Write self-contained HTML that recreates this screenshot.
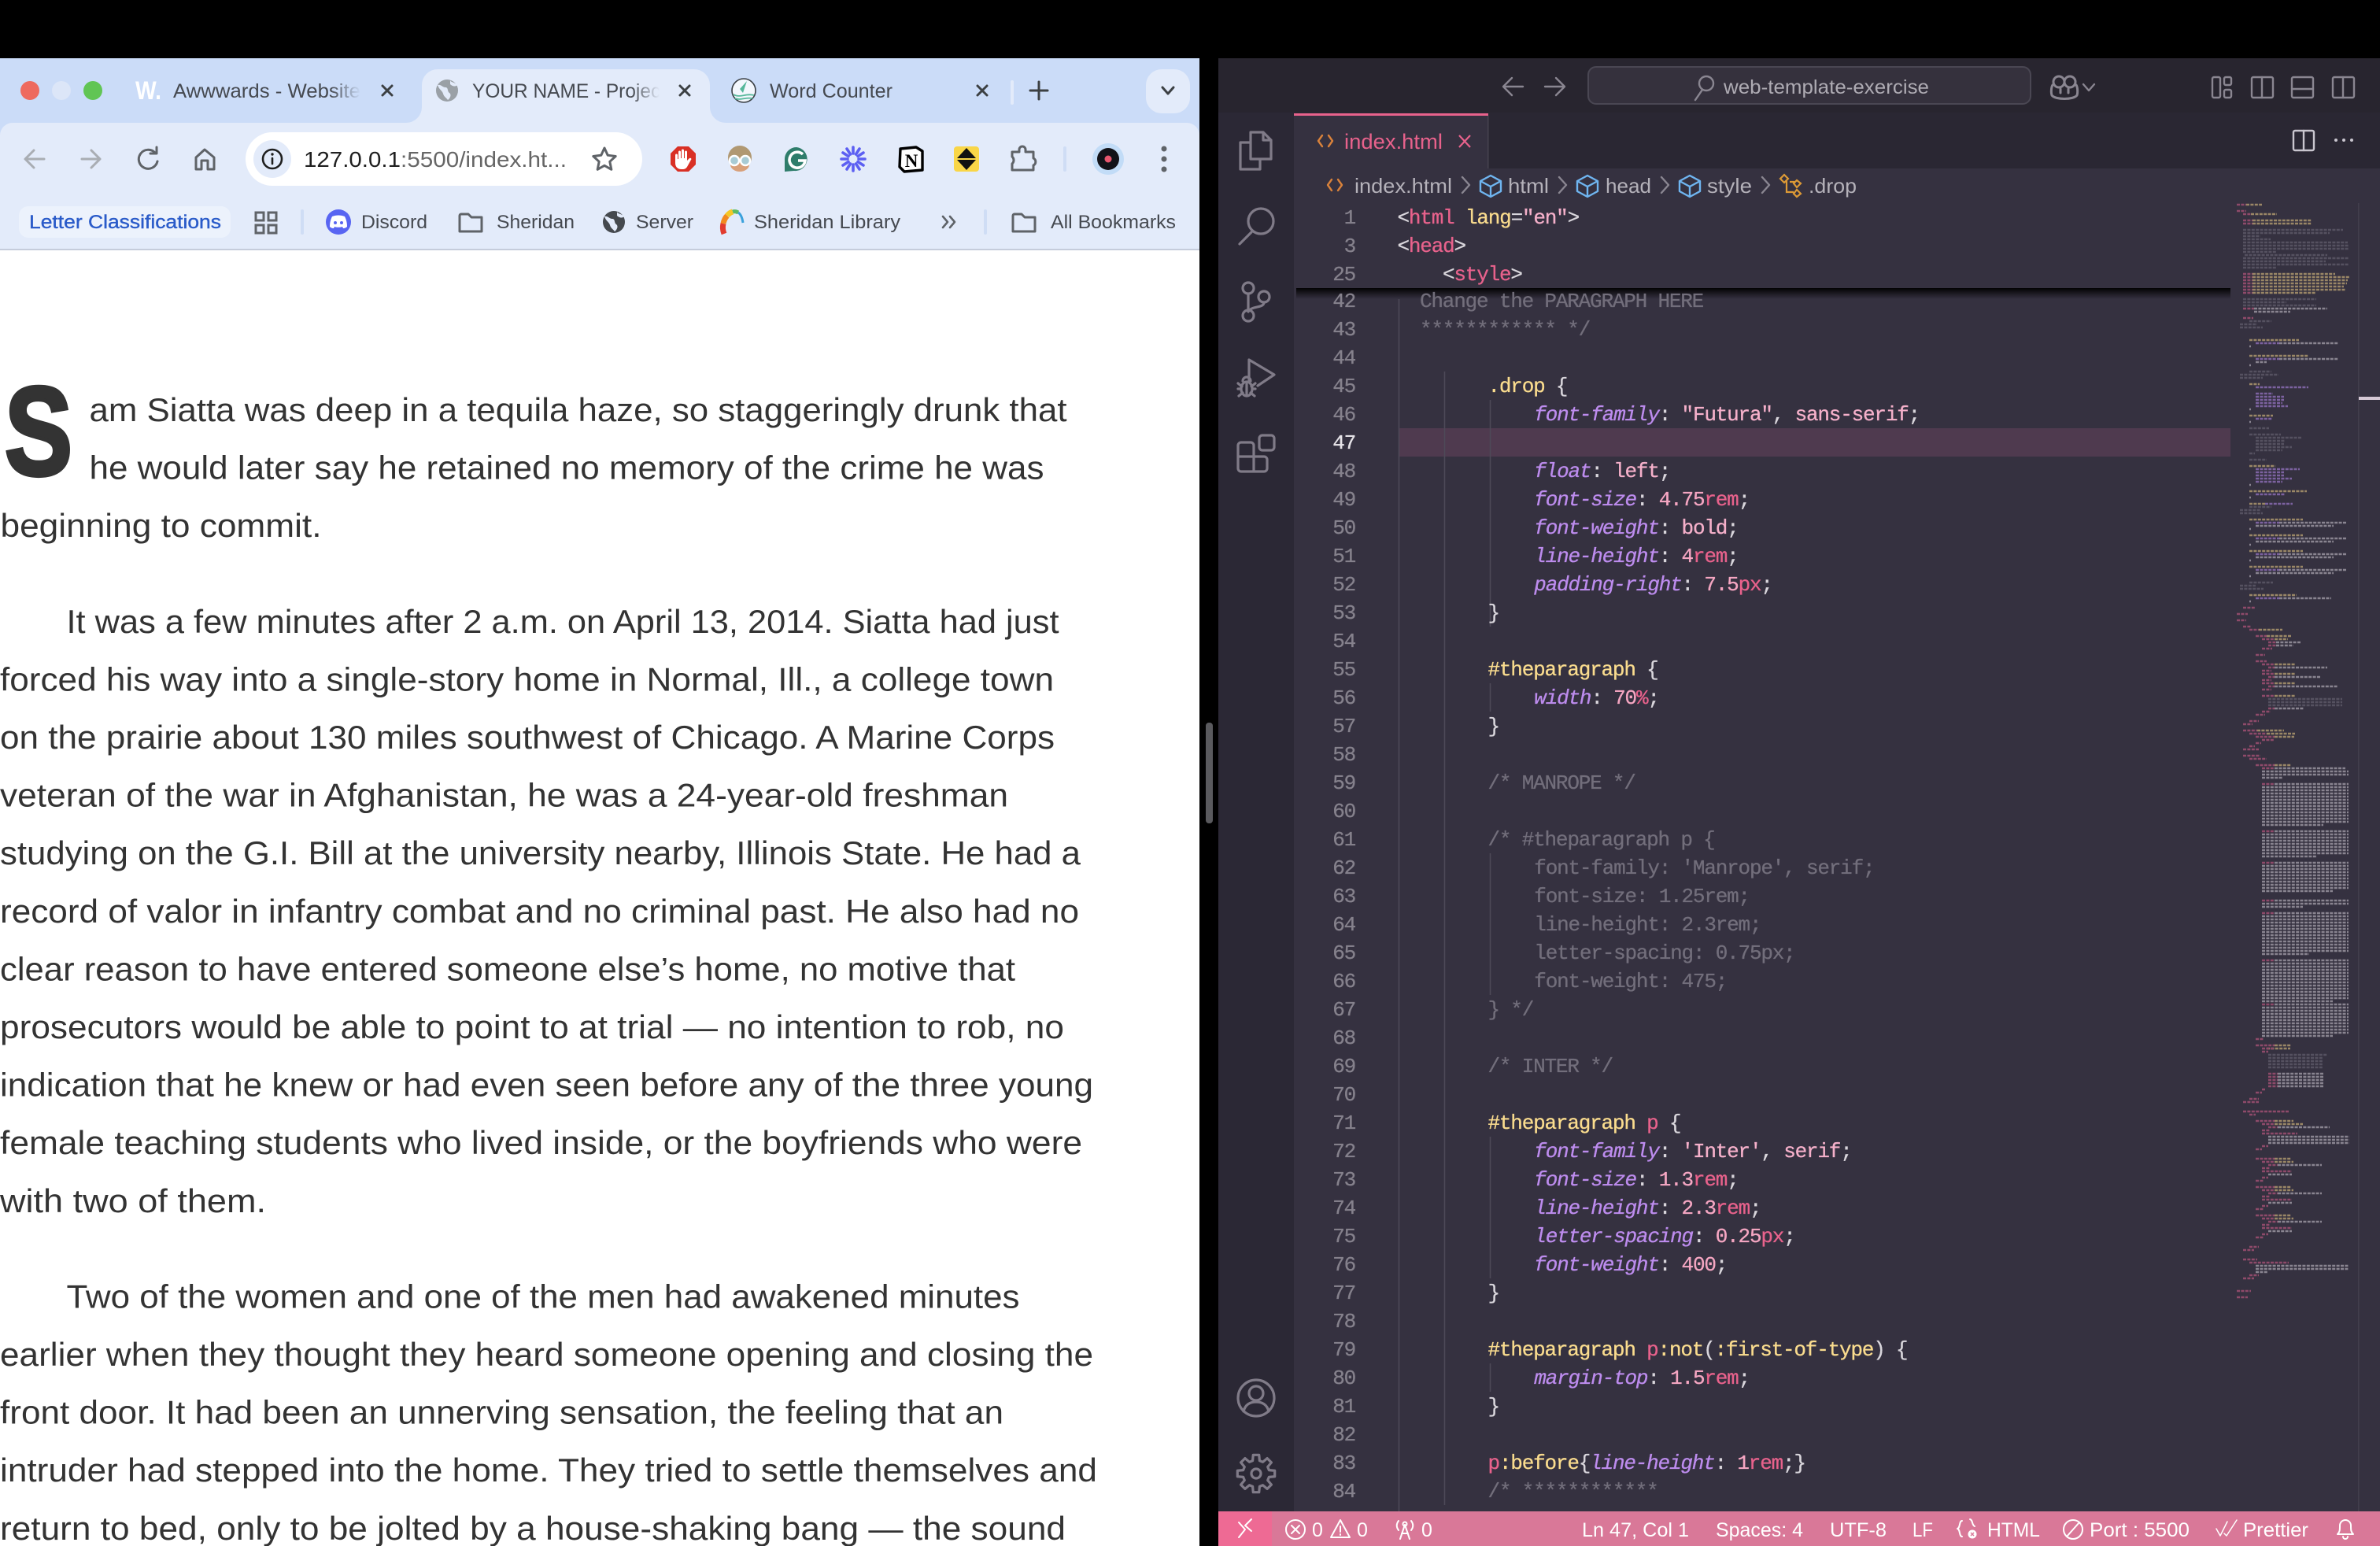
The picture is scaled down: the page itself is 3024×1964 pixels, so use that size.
<!DOCTYPE html>
<html lang="en">
<head>
<meta charset="utf-8">
<title>Screen</title>
<style>
html,body{margin:0;padding:0;background:#000;width:3024px;height:1964px;overflow:hidden}
svg{display:block}
text{white-space:pre}
.u{font-family:"Liberation Sans",sans-serif}
.a{font-family:"Liberation Sans",sans-serif;font-size:42px;fill:#333}
.t{font-family:"Liberation Sans",sans-serif;font-size:25px;fill:#454950}
.b{font-family:"Liberation Sans",sans-serif;font-size:24px;fill:#454950}
.m{font-family:"Liberation Mono",monospace;font-size:26px;letter-spacing:-1.2px;fill:#d9d6dc;stroke:#d9d6dc;stroke-width:.3}
.ln{font-family:"Liberation Mono",monospace;font-size:26px;letter-spacing:-1.2px;fill:#85818c;stroke:#85818c;stroke-width:.3;text-anchor:end}
.y{fill:#fadc8e;stroke:#fadc8e}.w{fill:#d9d6dc}.p{fill:#bd8cee;stroke:#bd8cee;font-style:italic}.s{fill:#f5b0ca;stroke:#f5b0ca}.k{fill:#e8628c;stroke:#e8628c}.n{fill:#f5a6c2;stroke:#f5a6c2}
.cm{fill:#726e7b;stroke:#726e7b}
.st{font-family:"Liberation Sans",sans-serif;font-size:25px;fill:#fff}
.bc{font-family:"Liberation Sans",sans-serif;font-size:26px;fill:#b5b2ba}
.i{fill:none;stroke:#807b88;stroke-width:3.2;stroke-linejoin:round;stroke-linecap:round}
.g{fill:none;stroke:#5f6368;stroke-width:3;stroke-linecap:round;stroke-linejoin:round}
.q{fill:none;stroke:#8a8691;stroke-width:2.4;stroke-linecap:round;stroke-linejoin:round}
.cube{fill:none;stroke:#6fb5f0;stroke-width:2.4;stroke-linejoin:round}
.sw{fill:none;stroke:#fff;stroke-width:2;stroke-linecap:round;stroke-linejoin:round}
</style>
</head>
<body>
<svg xmlns="http://www.w3.org/2000/svg" width="3024" height="1964" viewBox="0 0 3024 1964">
<defs>
<linearGradient id="f1"><stop offset="0" stop-color="#cbdcf8" stop-opacity="0"/><stop offset="1" stop-color="#cbdcf8"/></linearGradient>
<linearGradient id="f2"><stop offset="0" stop-color="#e3ebfa" stop-opacity="0"/><stop offset="1" stop-color="#e3ebfa"/></linearGradient>
<linearGradient id="sh" x1="0" y1="0" x2="0" y2="1"><stop offset="0" stop-color="#000" stop-opacity=".95"/><stop offset=".4" stop-color="#000" stop-opacity=".55"/><stop offset="1" stop-color="#000" stop-opacity="0"/></linearGradient>
</defs>
<rect width="3024" height="1964" fill="#000"/>

<!-- ============ CHROME ============ -->
<rect x="0" y="74" width="1524" height="244" fill="#cbdcf8"/>
<path d="M0 172a16 16 0 0 1 16-16H516a20 20 0 0 0 20-20V108a20 20 0 0 1 20-20H882a20 20 0 0 1 20 20v28a20 20 0 0 0 20 20H1508a16 16 0 0 1 16 16V316H0Z" fill="#e3ebfa"/>
<rect x="0" y="316" width="1524" height="2" fill="#c5ccdb"/>
<rect x="0" y="318" width="1524" height="1646" fill="#fff"/>
<circle cx="38" cy="115" r="12" fill="#ee6a5f"/><circle cx="78" cy="115" r="12" fill="#dce6f8"/><circle cx="118" cy="115" r="12" fill="#61c554"/>

<text class="u" x="172" y="126" font-size="32" font-weight="700" fill="#fff" textLength="33" lengthAdjust="spacingAndGlyphs">W.</text>
<text class="t" x="220" y="124" textLength="238" lengthAdjust="spacingAndGlyphs">Awwwards - Website</text>
<rect x="420" y="96" width="38" height="40" fill="url(#f1)"/>
<path d="M486 109l12 12M498 109l-12 12" stroke="#3c4043" stroke-width="3" stroke-linecap="round"/>

<circle cx="568" cy="115" r="14" fill="#9aa0a6"/>
<path d="M556 108c5-1 6 3 10 3s2 5 5 7 1 7-2 9c-2-3-5-4-6-8s-5-5-7-11zM572 102c1 3 5 2 9 6-3 3-7 1-9-1z" fill="#e3ebfa"/>
<text class="t" x="600" y="124" textLength="246" lengthAdjust="spacingAndGlyphs">YOUR NAME - Project</text>
<rect x="802" y="96" width="36" height="40" fill="url(#f2)"/><rect x="838" y="96" width="14" height="40" fill="#e3ebfa"/>
<path d="M864 109l12 12M876 109l-12 12" stroke="#3c4043" stroke-width="3" stroke-linecap="round"/>

<circle cx="945" cy="115" r="15" fill="#f3f7fd" stroke="#3a3f44" stroke-width="1.6"/>
<path d="M949 103l-5 15 -4-5z" fill="#56b79a"/><path d="M932 120c8 5 16-2 26 1M934 125c7 3 14-2 22 0" fill="none" stroke="#56b79a" stroke-width="1.8"/>
<text class="t" x="978" y="124" textLength="156" lengthAdjust="spacingAndGlyphs">Word Counter</text>
<path d="M1242 109l12 12M1254 109l-12 12" stroke="#3c4043" stroke-width="3" stroke-linecap="round"/>
<rect x="1284" y="102" width="4" height="31" rx="2" fill="#e3ebfa"/>
<path d="M1320 104v22M1309 115h22" stroke="#3c4043" stroke-width="3" stroke-linecap="round"/>
<rect x="1456" y="88" width="56" height="56" rx="20" fill="#e3ebfa"/>
<path d="M1477 111l7 8 7-8" fill="none" stroke="#3c4043" stroke-width="3" stroke-linecap="round" stroke-linejoin="round"/>

<path d="M56 202H33M43 191l-11 11 11 11" fill="none" stroke="#a9adb3" stroke-width="3" stroke-linecap="round" stroke-linejoin="round"/>
<path d="M104 202h23M116 191l11 11-11 11" fill="none" stroke="#a9adb3" stroke-width="3" stroke-linecap="round" stroke-linejoin="round"/>
<path class="g" d="M197 194A12 12 0 1 0 200 205M199 187v8h-8"/>
<path class="g" d="M260 190L249 200V215H256V204H264V215H272V200Z"/>

<rect x="312" y="168" width="504" height="68" rx="34" fill="#fff"/>
<rect x="322" y="178" width="48" height="48" rx="24" fill="#e3ebfa"/>
<circle cx="346" cy="202" r="12" fill="none" stroke="#1f1f1f" stroke-width="2.6"/>
<path d="M346 201v7" stroke="#1f1f1f" stroke-width="2.6" stroke-linecap="round"/><circle cx="346" cy="196" r="1.7" fill="#1f1f1f"/>
<text class="u" x="386" y="212" font-size="28" fill="#1f1f1f" textLength="123" lengthAdjust="spacingAndGlyphs">127.0.0.1</text>
<text class="u" x="509" y="212" font-size="28" fill="#666" textLength="211" lengthAdjust="spacingAndGlyphs">:5500/index.ht...</text>
<path class="g" d="M768 188l4.2 9.2 10 1.3-7.4 6.8 2 10-8.8-5-8.8 5 2-10-7.4-6.8 10-1.3z"/>

<!-- extensions -->
<path d="M861 186h14l9 9v14l-9 9h-14l-9-9v-14z" fill="#d93025"/>
<path d="M858 197c0-2 3-2 3 0v5h1v-9c0-2 3-2 3 0v8h1v-10c0-2 3-2 3 0v10h1v-8c0-2 3-2 3 0v11l3-3c2-1 3 1 2 2l-5 9c-2 3-4 3-7 3-5 0-8-3-8-8z" fill="#fff"/>
<circle cx="940" cy="200" r="15" fill="#b09872"/><ellipse cx="940" cy="209" rx="12" ry="9" fill="#d8a07a"/>
<circle cx="933" cy="204" r="6" fill="#a8cbd5" stroke="#fff" stroke-width="2.4"/><circle cx="947" cy="204" r="6" fill="#a8cbd5" stroke="#fff" stroke-width="2.4"/>
<path d="M1012 187a15 15 0 1 1-3 30l-12 1v-15a15 15 0 0 1 15-16z" fill="#2f7d6b"/>
<path d="M1020 196a10 10 0 1 0 3 8h-9" fill="none" stroke="#fff" stroke-width="3.6"/>
<g transform="translate(1084 202)" stroke="#5c5ff2" stroke-width="3.6" stroke-linecap="round"><path d="M0-7V-15M0 7V15M-7 0H-15M7 0H15M3.5-6L8-13M-3.5 6L-8 13M3.5 6L8 13M-3.5-6L-8-13M6-3.5L13-8M-6 3.5L-13 8M6 3.5L13 8M-6-3.5L-13-8"/></g>
<path d="M1144 189l20-2 8 5v24l-23 2-6-6z" fill="#fff" stroke="#000" stroke-width="3.4" stroke-linejoin="round"/>
<text x="1158" y="212" font-family="Liberation Serif,serif" font-weight="700" font-size="23" fill="#000" text-anchor="middle">N</text>
<rect x="1212" y="186" width="32" height="32" rx="4" fill="#f9d648"/>
<path d="M1228 188l12 13h-24zM1228 216l12-13h-24z" fill="#111"/>
<path class="g" d="M1286 193h9v-3a4 4 0 0 1 8 0v3h10v8a5 5 0 0 1 0 9v6h-27v-8a6 6 0 0 0 0-9z"/>
<rect x="1351" y="186" width="4" height="32" rx="2" fill="#cfddf5"/>
<circle cx="1408" cy="202" r="20" fill="#c2dcf7"/><circle cx="1408" cy="202" r="14" fill="#121218"/><circle cx="1408" cy="202" r="4.5" fill="#e8566e"/>
<circle cx="1479" cy="189" r="3.5" fill="#5f6368"/><circle cx="1479" cy="202" r="3.5" fill="#5f6368"/><circle cx="1479" cy="215" r="3.5" fill="#5f6368"/>

<!-- bookmarks -->
<rect x="24" y="262" width="269" height="40" rx="12" fill="#ecf2fc"/>
<text class="b" x="37" y="290" stroke="#2a5bc9" stroke-width=".4" textLength="244" lengthAdjust="spacingAndGlyphs" style="fill:#2a5bc9">Letter Classifications</text>
<g fill="none" stroke="#5f6368" stroke-width="3"><rect x="325" y="270" width="10" height="10"/><rect x="341" y="270" width="10" height="10"/><rect x="325" y="286" width="10" height="10"/><rect x="341" y="286" width="10" height="10"/></g>
<rect x="382" y="266" width="4" height="32" rx="2" fill="#cfddf5"/>
<circle cx="430" cy="282" r="16" fill="#5865f2"/>
<path d="M422 275c5-2 11-2 16 0 2 4 3 8 3 13-2 2-4 2-5 2l-1-2c-3 1-7 1-10 0l-1 2c-1 0-3 0-5-2 0-5 1-9 3-13z" fill="#fff"/>
<circle cx="426" cy="283" r="2" fill="#5865f2"/><circle cx="434" cy="283" r="2" fill="#5865f2"/>
<text class="b" x="459" y="290" textLength="84" lengthAdjust="spacingAndGlyphs">Discord</text>
<path class="g" d="M584 274a2 2 0 0 1 2-2h9l4 4h13v18h-28z"/>
<text class="b" x="631" y="290" textLength="99" lengthAdjust="spacingAndGlyphs">Sheridan</text>
<circle cx="780" cy="282" r="14" fill="#45494e"/>
<path d="M768 275c5-1 6 3 10 3s2 5 5 7 1 7-2 9c-2-3-5-4-6-8s-5-5-7-11zM784 269c1 3 5 2 9 6-3 3-7 1-9-1z" fill="#e3ebfa"/>
<text class="b" x="808" y="290" textLength="73" lengthAdjust="spacingAndGlyphs">Server</text>
<g fill="none" stroke-width="7"><path d="M920 297c-2-5-2-9-1-13" stroke="#e23b2e"/><path d="M919 284c1-5 3-8 5-10" stroke="#f28a1f"/><path d="M924 274c2-3 4-4 7-5" stroke="#f5c826"/><path d="M931 269c3-1 5 0 7 1" stroke="#5dbb63" stroke-width="5"/><path d="M938 270c3 2 5 6 6 13" stroke="#3aa1dc" stroke-width="3"/></g>
<text class="b" x="958" y="290" textLength="186" lengthAdjust="spacingAndGlyphs">Sheridan Library</text>
<path d="M1198 275l6 7-6 7M1207 275l6 7-6 7" fill="none" stroke="#5f6368" stroke-width="2.6" stroke-linecap="round" stroke-linejoin="round"/>
<rect x="1250" y="266" width="4" height="32" rx="2" fill="#cfddf5"/>
<path class="g" d="M1287 274a2 2 0 0 1 2-2h9l4 4h13v18h-28z"/>
<text class="b" x="1335" y="290" textLength="159" lengthAdjust="spacingAndGlyphs">All Bookmarks</text>

<!-- article -->
<text x="6" y="603" font-family="Liberation Sans,sans-serif" font-weight="700" font-size="160" fill="#333" stroke="#333" stroke-width="5" textLength="86" lengthAdjust="spacingAndGlyphs">S</text>
<text class="a" x="113.5" y="535" textLength="1242" lengthAdjust="spacingAndGlyphs">am Siatta was deep in a tequila haze, so staggeringly drunk that</text>
<text class="a" x="113.5" y="608.6" textLength="1213" lengthAdjust="spacingAndGlyphs">he would later say he retained no memory of the crime he was</text>
<text class="a" x="0.5" y="682.2" textLength="408" lengthAdjust="spacingAndGlyphs">beginning to commit.</text>
<text class="a" x="84.5" y="803.8" textLength="1261" lengthAdjust="spacingAndGlyphs">It was a few minutes after 2 a.m. on April 13, 2014. Siatta had just</text>
<text class="a" x="0" y="877.4" textLength="1339" lengthAdjust="spacingAndGlyphs">forced his way into a single-story home in Normal, Ill., a college town</text>
<text class="a" x="0" y="951" textLength="1340" lengthAdjust="spacingAndGlyphs">on the prairie about 130 miles southwest of Chicago. A Marine Corps</text>
<text class="a" x="0" y="1024.6" textLength="1281" lengthAdjust="spacingAndGlyphs">veteran of the war in Afghanistan, he was a 24-year-old freshman</text>
<text class="a" x="0" y="1098.2" textLength="1373" lengthAdjust="spacingAndGlyphs">studying on the G.I. Bill at the university nearby, Illinois State. He had a</text>
<text class="a" x="0" y="1171.8" textLength="1371" lengthAdjust="spacingAndGlyphs">record of valor in infantry combat and no criminal past. He also had no</text>
<text class="a" x="0" y="1245.4" textLength="1290" lengthAdjust="spacingAndGlyphs">clear reason to have entered someone else’s home, no motive that</text>
<text class="a" x="0" y="1319" textLength="1352" lengthAdjust="spacingAndGlyphs">prosecutors would be able to point to at trial — no intention to rob, no</text>
<text class="a" x="0" y="1392.6" textLength="1389" lengthAdjust="spacingAndGlyphs">indication that he knew or had even seen before any of the three young</text>
<text class="a" x="0" y="1466.2" textLength="1375" lengthAdjust="spacingAndGlyphs">female teaching students who lived inside, or the boyfriends who were</text>
<text class="a" x="0" y="1539.8" textLength="338" lengthAdjust="spacingAndGlyphs">with two of them.</text>
<text class="a" x="84.5" y="1661.4" textLength="1211" lengthAdjust="spacingAndGlyphs">Two of the women and one of the men had awakened minutes</text>
<text class="a" x="0" y="1735" textLength="1389" lengthAdjust="spacingAndGlyphs">earlier when they thought they heard someone opening and closing the</text>
<text class="a" x="0" y="1808.6" textLength="1275" lengthAdjust="spacingAndGlyphs">front door. It had been an unnerving sensation, the feeling that an</text>
<text class="a" x="0" y="1882.2" textLength="1394" lengthAdjust="spacingAndGlyphs">intruder had stepped into the home. They tried to settle themselves and</text>
<text class="a" x="0" y="1955.8" textLength="1354" lengthAdjust="spacingAndGlyphs">return to bed, only to be jolted by a house-shaking bang — the sound</text>

<!-- divider handle -->
<rect x="1532" y="918" width="9" height="128" rx="4" fill="#5a5a5e"/>

<!-- ============ VS CODE ============ -->
<rect x="1548" y="74" width="1476" height="1890" fill="#353140"/>
<rect x="1548" y="74" width="1476" height="69" fill="#28252f"/>
<rect x="1548" y="143" width="96" height="1777" fill="#2b2835"/>
<rect x="1644" y="143" width="1380" height="71" fill="#2a2733"/>
<rect x="1644" y="144" width="247" height="70" fill="#353140"/>
<rect x="1644" y="144" width="247" height="3" fill="#e8628c"/>
<rect x="1890" y="147" width="1.5" height="67" fill="#47434f"/>

<!-- title bar -->
<path class="q" d="M1935 110h-24M1921 99l-11 11 11 11M1963 110h24M1977 99l11 11-11 11"/>
<rect x="2018" y="85" width="562" height="47" rx="10" fill="#35313d" stroke="#4a4753" stroke-width="2"/>
<circle cx="2168" cy="106" r="9" class="q"/><path class="q" d="M2163 114l-9 13"/>
<text class="u" x="2190" y="119" font-size="25" fill="#aeabb3" textLength="261" lengthAdjust="spacingAndGlyphs">web-template-exercise</text>
<g class="q" style="stroke-width:3"><circle cx="2616" cy="104" r="7"/><circle cx="2630" cy="104" r="7"/><path d="M2608 108c-2 3-2 10-1 13 4 6 28 6 32 0 1-3 1-10-1-13"/><path d="M2618 113v5M2628 113v5"/></g>
<path class="q" d="M2647 107l7 8 7-8"/>
<g class="q"><rect x="2811" y="98" width="10" height="26" rx="2"/><rect x="2826" y="98" width="9" height="10" rx="2"/><rect x="2826" y="114" width="9" height="10" rx="2"/>
<rect x="2861" y="98" width="27" height="26" rx="2"/><path d="M2874 98v26"/>
<rect x="2912" y="98" width="27" height="26" rx="2"/><path d="M2912 113h27"/>
<rect x="2964" y="98" width="27" height="26" rx="2"/><path d="M2977 98v26"/></g>

<!-- tab -->
<path d="M1680 172l-5 7 5 7M1688 172l5 7-5 7" fill="none" stroke="#d9823b" stroke-width="2.4" stroke-linecap="round" stroke-linejoin="round"/>
<text class="u" x="1708" y="189" font-size="27" fill="#e8628c" textLength="125" lengthAdjust="spacingAndGlyphs">index.html</text>
<path d="M1854 172l14 15M1868 172l-14 15" stroke="#e8628c" stroke-width="2.2"/>
<g class="q" style="stroke:#c9c6cf"><rect x="2914" y="166" width="26" height="25" rx="2"/><path d="M2927 166v25"/></g>
<circle cx="2968" cy="178" r="2" fill="#c9c6cf"/><circle cx="2978" cy="178" r="2" fill="#c9c6cf"/><circle cx="2988" cy="178" r="2" fill="#c9c6cf"/>

<!-- breadcrumb -->
<g transform="translate(0 -2)">
<path d="M1692 230l-5 7 5 7M1700 230l5 7-5 7" fill="none" stroke="#d9823b" stroke-width="2.4" stroke-linecap="round" stroke-linejoin="round"/>
<text class="bc" x="1721" y="247" textLength="124" lengthAdjust="spacingAndGlyphs">index.html</text>
<path class="q" d="M1858 227l9 10-9 10M1981 227l9 10-9 10M2111 227l9 10-9 10M2239 227l9 10-9 10"/>
<path class="cube" d="M1894 225l13 7v13l-13 7-13-7v-13zM1881 232l13 7 13-7M1894 239v13"/>
<text class="bc" x="1916" y="247" textLength="52" lengthAdjust="spacingAndGlyphs">html</text>
<path class="cube" d="M2017 225l13 7v13l-13 7-13-7v-13zM2004 232l13 7 13-7M2017 239v13"/>
<text class="bc" x="2040" y="247" textLength="58" lengthAdjust="spacingAndGlyphs">head</text>
<path class="cube" d="M2147 225l13 7v13l-13 7-13-7v-13zM2134 232l13 7 13-7M2147 239v13"/>
<text class="bc" x="2169" y="247" textLength="57" lengthAdjust="spacingAndGlyphs">style</text>
<path d="M2267 224l5 5-5 5-5-5zM2283 231l5 4-5 5-4-5zM2283 243l5 5-5 4-4-4zM2270 232v14h9M2274 233h6" fill="none" stroke="#dd9a36" stroke-width="2.2"/>
<text class="bc" x="2298" y="247" textLength="61" lengthAdjust="spacingAndGlyphs">.drop</text>
</g>

<!-- sticky -->
<text class="ln" x="1722" y="284">1</text>
<text class="ln" x="1722" y="320">3</text>
<text class="ln" x="1722" y="356">25</text>
<text class="m" x="1775.5" y="284">&lt;<tspan class="k">html</tspan> <tspan class="y">lang</tspan>=<tspan class="s">"en"</tspan>&gt;</text>
<text class="m" x="1775.5" y="320">&lt;<tspan class="k">head</tspan>&gt;</text>
<text class="m" x="1833" y="356">&lt;<tspan class="k">style</tspan>&gt;</text>
<rect x="1647" y="366" width="1187" height="14" fill="url(#sh)"/>

<!-- highlight + guides -->
<rect x="1777" y="544" width="1057" height="36" fill="#4f3a4f"/>
<path d="M1777.5 380V1920M1835.5 472V1912M1893.5 508V796M1893.5 868V904M1893.5 1084V1264M1893.5 1444V1624M1893.5 1732V1768" stroke="#4e4a58" stroke-width="1.5" fill="none"/>

<!-- numbers -->
<g>
<text class="ln" x="1722" y="390">42</text><text class="ln" x="1722" y="426">43</text><text class="ln" x="1722" y="462">44</text><text class="ln" x="1722" y="498">45</text><text class="ln" x="1722" y="534">46</text><text class="ln" x="1722" y="570" style="fill:#e6e3e8;stroke:#e6e3e8">47</text><text class="ln" x="1722" y="606">48</text><text class="ln" x="1722" y="642">49</text><text class="ln" x="1722" y="678">50</text><text class="ln" x="1722" y="714">51</text><text class="ln" x="1722" y="750">52</text><text class="ln" x="1722" y="786">53</text><text class="ln" x="1722" y="822">54</text><text class="ln" x="1722" y="858">55</text><text class="ln" x="1722" y="894">56</text><text class="ln" x="1722" y="930">57</text><text class="ln" x="1722" y="966">58</text><text class="ln" x="1722" y="1002">59</text><text class="ln" x="1722" y="1038">60</text><text class="ln" x="1722" y="1074">61</text><text class="ln" x="1722" y="1110">62</text><text class="ln" x="1722" y="1146">63</text><text class="ln" x="1722" y="1182">64</text><text class="ln" x="1722" y="1218">65</text><text class="ln" x="1722" y="1254">66</text><text class="ln" x="1722" y="1290">67</text><text class="ln" x="1722" y="1326">68</text><text class="ln" x="1722" y="1362">69</text><text class="ln" x="1722" y="1398">70</text><text class="ln" x="1722" y="1434">71</text><text class="ln" x="1722" y="1470">72</text><text class="ln" x="1722" y="1506">73</text><text class="ln" x="1722" y="1542">74</text><text class="ln" x="1722" y="1578">75</text><text class="ln" x="1722" y="1614">76</text><text class="ln" x="1722" y="1650">77</text><text class="ln" x="1722" y="1686">78</text><text class="ln" x="1722" y="1722">79</text><text class="ln" x="1722" y="1758">80</text><text class="ln" x="1722" y="1794">81</text><text class="ln" x="1722" y="1830">82</text><text class="ln" x="1722" y="1866">83</text><text class="ln" x="1722" y="1902">84</text>
</g>

<!-- code -->
<text class="m cm" x="1804" y="390">Change the PARAGRAPH HERE</text>
<text class="m cm" x="1804" y="426">************ */</text>
<text class="m" x="1890.5" y="498"><tspan class="y">.drop</tspan> {</text>
<text class="m" x="1949.3" y="534"><tspan class="p">font-family</tspan>: <tspan class="s">"Futura"</tspan>, <tspan class="s">sans-serif</tspan>;</text>
<text class="m" x="1949.3" y="606"><tspan class="p">float</tspan>: <tspan class="s">left</tspan>;</text>
<text class="m" x="1949.3" y="642"><tspan class="p">font-size</tspan>: <tspan class="n">4.75</tspan><tspan class="k">rem</tspan>;</text>
<text class="m" x="1949.3" y="678"><tspan class="p">font-weight</tspan>: <tspan class="s">bold</tspan>;</text>
<text class="m" x="1949.3" y="714"><tspan class="p">line-height</tspan>: <tspan class="n">4</tspan><tspan class="k">rem</tspan>;</text>
<text class="m" x="1949.3" y="750"><tspan class="p">padding-right</tspan>: <tspan class="n">7.5</tspan><tspan class="k">px</tspan>;</text>
<text class="m" x="1890.5" y="786">}</text>
<text class="m" x="1890.5" y="858"><tspan class="y">#theparagraph</tspan> {</text>
<text class="m" x="1949.3" y="894"><tspan class="p">width</tspan>: <tspan class="n">70</tspan><tspan class="k">%</tspan>;</text>
<text class="m" x="1890.5" y="930">}</text>
<text class="m cm" x="1890.5" y="1002">/* MANROPE */</text>
<text class="m cm" x="1890.5" y="1074">/* #theparagraph p {</text>
<text class="m cm" x="1949.3" y="1110">font-family: 'Manrope', serif;</text>
<text class="m cm" x="1949.3" y="1146">font-size: 1.25rem;</text>
<text class="m cm" x="1949.3" y="1182">line-height: 2.3rem;</text>
<text class="m cm" x="1949.3" y="1218">letter-spacing: 0.75px;</text>
<text class="m cm" x="1949.3" y="1254">font-weight: 475;</text>
<text class="m cm" x="1890.5" y="1290">} */</text>
<text class="m cm" x="1890.5" y="1362">/* INTER */</text>
<text class="m" x="1890.5" y="1434"><tspan class="y">#theparagraph</tspan> <tspan class="k">p</tspan> {</text>
<text class="m" x="1949.3" y="1470"><tspan class="p">font-family</tspan>: <tspan class="s">'Inter'</tspan>, <tspan class="s">serif</tspan>;</text>
<text class="m" x="1949.3" y="1506"><tspan class="p">font-size</tspan>: <tspan class="n">1.3</tspan><tspan class="k">rem</tspan>;</text>
<text class="m" x="1949.3" y="1542"><tspan class="p">line-height</tspan>: <tspan class="n">2.3</tspan><tspan class="k">rem</tspan>;</text>
<text class="m" x="1949.3" y="1578"><tspan class="p">letter-spacing</tspan>: <tspan class="n">0.25</tspan><tspan class="k">px</tspan>;</text>
<text class="m" x="1949.3" y="1614"><tspan class="p">font-weight</tspan>: <tspan class="n">400</tspan>;</text>
<text class="m" x="1890.5" y="1650">}</text>
<text class="m" x="1890.5" y="1722"><tspan class="y">#theparagraph</tspan> <tspan class="k">p</tspan><tspan class="y">:not</tspan>(<tspan class="y">:first-of-type</tspan>) {</text>
<text class="m" x="1949.3" y="1758"><tspan class="p">margin-top</tspan>: <tspan class="n">1.5</tspan><tspan class="k">rem</tspan>;</text>
<text class="m" x="1890.5" y="1794">}</text>
<text class="m" x="1890.5" y="1866"><tspan class="k">p</tspan><tspan class="y">:before</tspan>{<tspan class="p">line-height</tspan>: <tspan class="n">1</tspan><tspan class="k">rem</tspan>;}</text>
<text class="m cm" x="1890.5" y="1902">/* ************</text>

<!-- minimap -->
<g fill="none" stroke-width="2.4" stroke-dasharray="4 1.4" opacity=".62">
<path stroke="#6a6674" d="M2850 292h127M2850 296h110M2850 300h22M2850 304h35M2850 308h133M2850 312h135M2850 316h135M2850 320h43M2852 324h105M2850 328h135M2850 332h105M2850 336h135M2850 340h43M2850 380h93M2850 384h55M2850 388h93M2858 408h28M2846 412h22M2846 416h29M2858 472h28M2846 476h49M2846 480h29M2858 544h25M2858 552h40M2866 556h59M2866 560h37M2866 564h36M2866 568h46M2866 572h34M2858 576h7M2858 584h22M2858 644h28M2846 648h27M2846 652h29M2858 740h30M2846 744h20M2846 748h30M2882 888h94M2882 892h94M2882 896h94M2882 1340h75M2882 1344h70M2882 1348h70M2882 1352h70M2882 1356h70"/>
<path stroke="#d9bd7e" d="M2854 260h20M2860 272h33M2862 280h75M2862 284h75M2862 348h105M2862 352h123M2862 356h121M2862 360h120M2862 364h116M2862 368h118M2862 372h81M2858 432h63M2858 452h75M2858 488h13M2858 528h30M2858 592h33M2858 624h73M2858 640h20M2858 660h68M2858 680h68M2858 700h68M2858 720h68M2858 756h60M2870 800h30M2880 808h31M2890 812h17M2890 844h27M2890 856h27M2890 868h27M2890 884h27M2868 928h34M2880 932h36M2890 936h25M2890 972h21M2890 1328h21M2880 1332h30M2890 1424h24M2890 1428h36M2890 1472h21M2890 1476h24M2890 1508h21M2890 1512h24M2890 1544h21M2890 1548h24"/>
<path stroke="#c55a85" d="M2842 260h12M2842 268h12M2850 272h10M2850 280h12M2850 284h12M2850 348h12M2850 352h12M2850 356h12M2850 360h12M2850 364h12M2850 368h12M2850 372h12M2850 392h14M2850 404h13M2850 772h16M2842 780h14M2842 788h12M2850 796h10M2858 800h12M2866 808h14M2874 812h16M2882 816h10M2882 820h10M2874 824h13M2866 832h12M2866 840h14M2874 844h16M2882 848h8M2874 852h12M2874 856h16M2882 860h8M2874 864h12M2874 868h16M2882 872h8M2874 876h12M2874 884h16M2882 900h8M2874 904h11M2866 908h12M2858 916h12M2850 920h12M2850 928h18M2858 932h22M2866 936h24M2874 940h16M2866 944h7M2858 948h7M2850 952h20M2850 960h22M2858 964h22M2866 972h24M2874 976h16M2874 996h16M2874 1056h16M2874 1096h16M2874 1144h16M2874 1160h16M2874 1220h16M2874 1276h16M2866 1320h10M2866 1328h24M2874 1332h16M2874 1336h8M2882 1364h12M2882 1368h12M2882 1372h12M2882 1376h12M2882 1380h12M2874 1384h5M2866 1388h8M2858 1396h12M2850 1400h20M2850 1412h58M2858 1416h8M2866 1424h24M2874 1428h16M2882 1432h12M2874 1436h10M2874 1440h45M2874 1456h8M2866 1460h8M2866 1472h24M2874 1476h16M2882 1480h12M2874 1484h10M2874 1488h38M2874 1496h8M2866 1500h10M2866 1508h24M2874 1512h16M2882 1516h12M2874 1520h10M2874 1524h38M2874 1532h8M2866 1536h10M2866 1544h24M2874 1548h16M2882 1552h12M2874 1556h10M2874 1560h38M2874 1568h8M2866 1572h10M2858 1584h12M2850 1588h14M2850 1600h18M2858 1604h50M2858 1620h12M2850 1624h14M2842 1640h18M2842 1648h14"/>
<path stroke="#a880dc" d="M2866 436h30M2866 456h30M2866 492h67M2866 500h22M2866 504h36M2866 508h36M2866 512h34M2866 516h41M2866 532h21M2866 596h56M2866 600h36M2866 604h36M2866 608h46M2866 612h34M2866 628h37M2878 640h35M2866 664h30M2866 684h30M2866 704h30M2866 724h30M2866 760h30"/>
<path stroke="#bdb7c1" d="M2864 392h93M2864 396h46M2896 436h75M2896 456h75M2866 460h14M2858 440h2M2858 464h2M2858 520h2M2858 536h2M2858 616h2M2858 632h2M2858 672h2M2858 692h2M2858 712h2M2858 732h2M2858 764h2M2896 664h85M2866 668h99M2896 684h85M2866 688h99M2896 704h85M2866 708h99M2896 724h85M2866 728h99M2896 760h66M2892 816h32M2892 820h22M2890 848h67M2890 860h59M2890 872h80M2890 900h37M2890 976h90M2874 980h110M2874 984h110M2874 988h26M2890 996h94M2874 1000h110M2874 1004h110M2874 1008h110M2874 1012h110M2874 1016h110M2874 1020h110M2874 1024h110M2874 1028h110M2874 1032h110M2874 1036h110M2874 1040h110M2874 1044h110M2874 1048h78M2890 1056h94M2874 1060h110M2874 1064h110M2874 1068h110M2874 1072h110M2874 1076h110M2874 1080h110M2874 1084h110M2874 1088h70M2890 1096h94M2874 1100h110M2874 1104h110M2874 1108h110M2874 1112h110M2874 1116h110M2874 1120h110M2874 1124h110M2874 1128h110M2874 1132h90M2890 1144h94M2874 1148h110M2874 1152h52M2890 1160h94M2874 1164h110M2874 1168h110M2874 1172h110M2874 1176h110M2874 1180h110M2874 1184h110M2874 1188h110M2874 1192h110M2874 1196h110M2874 1200h110M2874 1204h110M2874 1208h110M2874 1212h60M2890 1220h94M2874 1224h110M2874 1228h110M2874 1232h110M2874 1236h110M2874 1240h110M2874 1244h110M2874 1248h110M2874 1252h110M2874 1256h110M2874 1260h110M2874 1264h110M2874 1268h110M2874 1272h90M2890 1276h94M2874 1280h110M2874 1284h110M2874 1288h110M2874 1292h110M2874 1296h110M2874 1300h110M2874 1304h110M2874 1308h110M2874 1312h110M2874 1316h90M2894 1364h58M2894 1368h58M2894 1372h58M2894 1376h58M2894 1380h58M2882 1444h103M2882 1448h103M2882 1452h103M2894 1432h66M2894 1480h56M2882 1492h30M2894 1516h56M2882 1528h30M2894 1552h56M2882 1564h30M2866 1608h118M2866 1612h118M2866 1616h16"/>
</g>
<rect x="2996" y="258" width="1.5" height="1662" fill="#423e4c"/>
<rect x="2997" y="504" width="27" height="4" fill="#d5c8d5"/>

<!-- activity bar -->
<path class="i" d="M1589 168H1605L1615 178V202H1589ZM1605 168V178H1615M1589 181H1576V215H1601V203"/>
<path class="i" d="M1590 295L1575 310"/><circle class="i" cx="1602" cy="281" r="16"/>
<circle class="i" cx="1586" cy="366" r="7"/><circle class="i" cx="1586" cy="401" r="7"/><circle class="i" cx="1606" cy="377" r="7"/><path class="i" d="M1586 373V394M1606 384C1606 392 1590 388 1586 396"/>
<path class="i" d="M1587 484V457L1619 476L1598 490"/><ellipse class="i" cx="1584" cy="494" rx="7" ry="9"/><path class="i" d="M1573 487l5 4M1573 494h4M1574 503l5-4M1595 487l-5 4M1595 494h-4M1594 503l-5-4M1579 484a5 5 0 0 1 10 0M1584 486v17"/>
<path class="i" d="M1573 580V566a4 4 0 0 1 4-4H1589a4 4 0 0 1 4 4V599M1573 580V595a4 4 0 0 0 4 4H1606a4 4 0 0 0 4-4V584a4 4 0 0 0-4-4H1573"/><rect class="i" x="1600" y="553" width="19" height="19" rx="4"/>
<circle class="i" cx="1596" cy="1776" r="23"/><circle class="i" cx="1596" cy="1770" r="9"/><path class="i" d="M1580 1793c2-8 7-12 16-12s14 4 16 12"/>
<polygon class="i" transform="translate(1596 1872)" points="16.4,-4.4 23.7,-3.75 23.7,3.75 16.4,4.4 14.7,8.5 19.4,14.1 14.1,19.4 8.5,14.7 4.4,16.4 3.75,23.7 -3.75,23.7 -4.4,16.4 -8.5,14.7 -14.1,19.4 -19.4,14.1 -14.7,8.5 -16.4,4.4 -23.7,3.75 -23.7,-3.75 -16.4,-4.4 -14.7,-8.5 -19.4,-14.1 -14.1,-19.4 -8.5,-14.7 -4.4,-16.4 -3.75,-23.7 3.75,-23.7 4.4,-16.4 8.5,-14.7 14.1,-19.4 19.4,-14.1 14.7,-8.5"/>
<circle class="i" cx="1596" cy="1872" r="6"/>

<!-- status bar -->
<rect x="1548" y="1920" width="1476" height="44" fill="#d97898"/>
<rect x="1548" y="1920" width="68" height="44" fill="#ee6a94"/>
<path class="sw" d="M1574 1934L1582 1943L1574 1953M1590 1930L1582 1938L1590 1945"/>
<circle class="sw" cx="1646" cy="1943" r="12"/><path class="sw" d="M1641 1938l10 10M1651 1938l-10 10"/>
<text class="st" x="1667" y="1952">0</text>
<path class="sw" d="M1703 1931l12 22h-24zM1703 1939v7M1703 1949v1"/>
<text class="st" x="1724" y="1952">0</text>
<path class="sw" d="M1785 1937l-6 18M1785 1937l6 18M1781 1948h8M1777 1932c-3 4-3 8 0 12M1793 1932c3 4 3 8 0 12"/><circle class="sw" cx="1785" cy="1936" r="2.5"/>
<text class="st" x="1806" y="1952">0</text>
<text class="st" x="2010" y="1952" textLength="136" lengthAdjust="spacingAndGlyphs">Ln 47, Col 1</text>
<text class="st" x="2180" y="1952" textLength="111" lengthAdjust="spacingAndGlyphs">Spaces: 4</text>
<text class="st" x="2325" y="1952" textLength="72" lengthAdjust="spacingAndGlyphs">UTF-8</text>
<text class="st" x="2430" y="1952" textLength="26" lengthAdjust="spacingAndGlyphs">LF</text>
<path class="sw" d="M2493 1932c-4 0-2 9-6 10 4 1 2 10 6 10M2503 1930c4 1 2 7 6 9"/><circle cx="2506" cy="1949" r="5.5" fill="#fff"/><path d="M2504 1947l4 4M2508 1947l-4 4" stroke="#d97898" stroke-width="1.4"/>
<text class="st" x="2525" y="1952" textLength="67" lengthAdjust="spacingAndGlyphs">HTML</text>
<circle class="sw" cx="2634" cy="1943" r="12"/><path class="sw" d="M2626 1952l16-18"/>
<text class="st" x="2655" y="1952" textLength="127" lengthAdjust="spacingAndGlyphs">Port : 5500</text>
<path class="sw" style="stroke-width:1.5" d="M2816 1942l5 9 9-18M2826 1948l3 3 13-20"/>
<text class="st" x="2850" y="1952" textLength="83" lengthAdjust="spacingAndGlyphs">Prettier</text>
<path class="sw" d="M2970 1949h20c-3-3-3-5-3-11a7 7 0 0 0-14 0c0 6 0 8-3 11zM2977 1952a3 3 0 0 0 6 0"/>
</svg>
</body>
</html>
